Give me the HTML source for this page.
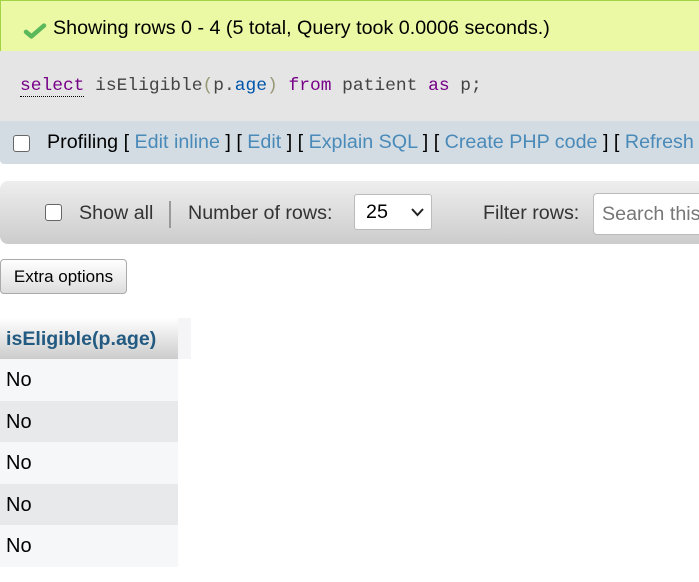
<!DOCTYPE html>
<html><head><style>
body{margin:0;width:699px;height:582px;overflow:hidden;background:#fff;font-family:"Liberation Sans",Arial,sans-serif;position:relative}
.a{position:absolute}
.succ{left:0;top:0;width:699px;height:51px;background:#ebf8a4;border-left:1px solid #a2d246;border-top:1px solid #a2d246;box-sizing:border-box;font-size:19.7px;color:#000;line-height:54px}
.sql{left:0;top:51px;width:699px;height:70px;background:#e5e5e5;font-family:"Liberation Mono",monospace;font-size:17.9px;line-height:68px;color:#444}
.prof{left:0;top:121px;width:699px;height:43px;background:#d3dce3;font-size:19.7px;line-height:43px;border-bottom-left-radius:4px}
.prof a{color:#4a8ab9;text-decoration:none}
.nav{left:0;top:181px;width:699px;height:63px;background:linear-gradient(#eee,#ccc);border-radius:8px 0 0 8px;font-size:19.7px;color:#333;line-height:63px}
.cb{display:inline-block;width:15px;height:15px;border:1.5px solid #666;border-radius:3px;background:#fff;vertical-align:middle}
.btn{left:0;top:259px;width:125px;height:33px;border:1px solid #aaa;border-radius:4px;background:linear-gradient(#fff,#ddd);font-size:17px;line-height:33px;text-align:center;color:#000}
.row{left:0;width:178px;height:41.5px;font-size:20px;line-height:43px;padding-left:6px;box-sizing:border-box}
</style></head><body>
<div class="a succ"><svg class="a" style="left:22px;top:21px" width="24" height="18" viewBox="0 0 26 20"><path d="M3 11 L9 16 L23 4" stroke="#5bb85b" stroke-width="5" fill="none" stroke-linecap="round" stroke-linejoin="round"/></svg><span style="position:absolute;left:52px;top:0">Showing rows 0 - 4 (5 total, Query took 0.0006 seconds.)</span></div>
<div class="a sql"><span style="position:absolute;left:20px;top:1px;white-space:pre"><span style="color:#708;border-bottom:1px dotted #000">select</span> isEligible<span style="color:#997">(</span>p.<span style="color:#05a">age</span><span style="color:#997">)</span> <span style="color:#708">from</span> patient <span style="color:#708">as</span> p;</span></div>
<div class="a prof"><span class="cb" style="position:absolute;left:13px;top:14px"></span><span style="position:absolute;left:47px;top:0;white-space:nowrap">Profiling [ <a>Edit inline</a> ] [ <a>Edit</a> ] [ <a>Explain SQL</a> ] [ <a>Create PHP code</a> ] [ <a>Refresh</a> ]</span></div>
<div class="a nav"><span class="cb" style="position:absolute;left:45px;top:23px"></span><span class="a" style="left:79px;top:1px">Show all</span><span class="a" style="left:169px;top:20px;width:2px;height:27px;background:#999"></span><span class="a" style="left:188px;top:1px">Number of rows:</span>
<span class="a" style="left:354px;top:13px;width:76px;height:34px;background:#fff;border:1px solid #bbb;border-radius:3px;line-height:34px;color:#000"><span style="margin-left:11px">25</span><svg class="a" style="left:56px;top:13px" width="13" height="9"><path d="M1 1 L6.5 7 L12 1" stroke="#222" stroke-width="2" fill="none"/></svg></span>
<span class="a" style="left:483px;top:1px">Filter rows:</span>
<span class="a" style="left:593px;top:12px;width:120px;height:42px;background:#fff;border:1px solid #bbb;border-radius:4px;line-height:40px;color:#777;padding-left:8px;box-sizing:border-box">Search this</span></div>
<div class="a btn">Extra options</div>
<div class="a" style="left:0;top:318px;width:191px;height:41px;background:#f5f5f7"></div>
<div class="a" style="left:0;top:318px;width:178px;height:41px;background:linear-gradient(#fff,#ccc);font-weight:bold;color:#235a81;font-size:19.6px;line-height:42px;padding-left:6px;box-sizing:border-box">isEligible(p.age)</div>
<div class="a row" style="top:359px;background:#f6f7f9">No</div>
<div class="a row" style="top:400.5px;background:#e8e9eb">No</div>
<div class="a row" style="top:442px;background:#f6f7f9">No</div>
<div class="a row" style="top:483.5px;background:#e8e9eb">No</div>
<div class="a row" style="top:525px;background:#f6f7f9">No</div>
</body></html>
